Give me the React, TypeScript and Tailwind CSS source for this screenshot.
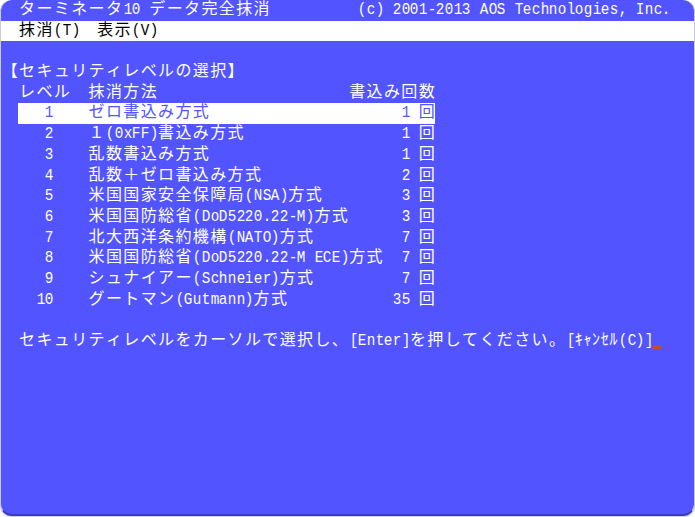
import React from "react";

// terminal grid: 80 cols, cell 8.69px wide, 20.7px tall
const isWide = (ch: string) => {
  const c = ch.codePointAt(0) ?? 0;
  if (c < 0x100) return false;
  if (c >= 0xff61 && c <= 0xff9f) return false;
  return true;
};

const widthOf = (s: string) =>
  Array.from(s).reduce((n, ch) => n + (isWide(ch) ? 2 : 1), 0);

// put text pieces at given columns
const place = (parts: [number, string][]) => {
  let out = "";
  for (const [col, text] of parts) {
    const w = widthOf(out);
    if (col > w) out += " ".repeat(col - w);
    out += text;
  }
  return out;
};

const Cells = ({ text }: { text: string }) => (
  <>
    {Array.from(text).map((ch, i) => {
      if (isWide(ch))
        return (
          <span key={i} className="inline-block w-[17.38px] text-center text-[16px]">
            {ch}
          </span>
        );
      const c = ch.codePointAt(0) ?? 0;
      if (c >= 0xff61)
        return (
          <span key={i} className="inline-block w-[8.69px] text-center text-[16px]">
            {ch}
          </span>
        );
      return (
        <span key={i} className="inline-block w-[8.69px] text-center text-[17px] scale-x-[0.84]">
          {ch === " " ? "\u00a0" : ch}
        </span>
      );
    })}
  </>
);

const Line = ({ text = "", className = "" }: { text?: string; className?: string }) => (
  <div className={`h-[20.7px] leading-[20.7px] whitespace-nowrap ${className}`}>
    <Cells text={text} />
  </div>
);

const methods = [
  { lv: "1", name: "ゼロ書込み方式", n: "1" },
  { lv: "2", name: "１(0xFF)書込み方式", n: "1" },
  { lv: "3", name: "乱数書込み方式", n: "1" },
  { lv: "4", name: "乱数＋ゼロ書込み方式", n: "2" },
  { lv: "5", name: "米国国家安全保障局(NSA)方式", n: "3" },
  { lv: "6", name: "米国国防総省(DoD5220.22-M)方式", n: "3" },
  { lv: "7", name: "北大西洋条約機構(NATO)方式", n: "7" },
  { lv: "8", name: "米国国防総省(DoD5220.22-M ECE)方式", n: "7" },
  { lv: "9", name: "シュナイアー(Schneier)方式", n: "7" },
  { lv: "10", name: "グートマン(Gutmann)方式", n: "35" },
];

const rowText = (m: (typeof methods)[number]) =>
  place([
    [6 - m.lv.length, m.lv],
    [10, m.name],
    [47 - m.n.length, m.n],
    [48, "回"],
  ]);

export default function App() {
  const selected = 0;
  return (
    <div className="w-[695px] h-[517px] bg-white font-['Liberation_Mono','Noto_Sans_CJK_JP',monospace]">
      <div className="w-[695px] h-[516px] rounded-[12px] overflow-hidden bg-[#5254ff] text-white border-b-2 border-[#3a3cc4] border-x border-x-[#c9c9dc] shadow-[0_1px_2px_rgba(0,0,0,0.25)]">
        {/* TITLE */}
        <Line
          text={place([
            [2, "ターミネータ10 データ完全抹消"],
            [41, "(c) 2001-2013 AOS Technologies, Inc."],
          ])}
        />
        {/* MENU */}
        <Line className="bg-white text-black" text={place([[2, "抹消(T)"], [11, "表示(V)"]])} />
        <Line />
        <Line text="【セキュリティレベルの選択】" />
        <Line text={place([[2, "レベル"], [10, "抹消方法"], [40, "書込み回数"]])} />
        {/* LIST */}
        {methods.map((m, i) => {
          const t = rowText(m);
          if (i !== selected) return <Line key={i} text={t} />;
          const padded = t + " ".repeat(Math.max(0, 50 - widthOf(t)));
          const chars = Array.from(padded);
          return (
            <div key={i} className="h-[20.7px] leading-[20.7px] whitespace-nowrap">
              <Cells text={chars.slice(0, 2).join("")} />
              <span className="inline-block bg-white text-[#5254ff]">
                <Cells text={chars.slice(2).join("")} />
              </span>
            </div>
          );
        })}
        <Line />
        {/* FOOTER */}
        <div className="h-[20.7px] leading-[20.7px] whitespace-nowrap flex items-end">
          <span>
            <Cells
              text={place([
                [2, "セキュリティレベルをカーソルで選択し、[Enter]を押してください。[ｷｬﾝｾﾙ(C)]"],
              ])}
            />
          </span>
          <span className="inline-block w-[8.69px] h-[5px] mb-[2px] bg-[#c0530c]" />
        </div>
      </div>
    </div>
  );
}
